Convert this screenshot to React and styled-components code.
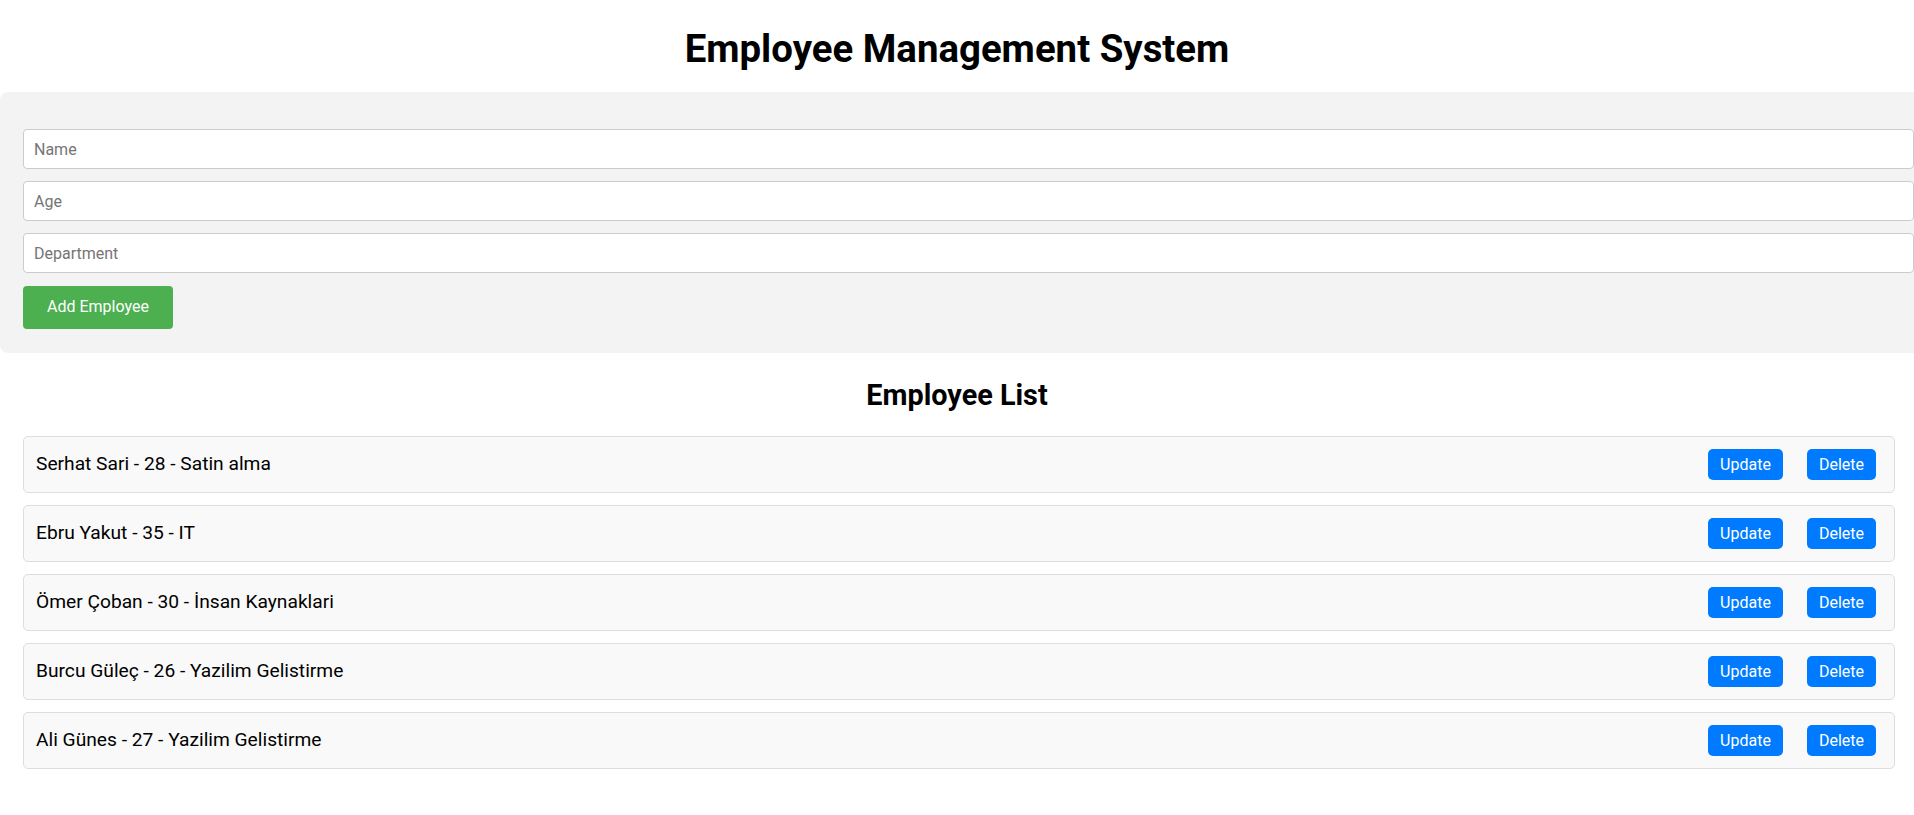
import React from "react";
import styled, { createGlobalStyle } from "styled-components";

const GlobalStyle = createGlobalStyle`
  html, body {
    margin: 0;
    padding: 0;
    overflow-x: hidden;
    background: #ffffff;
  }
  body {
    font-family: Roboto, "Liberation Sans", Arial, sans-serif;
    color: #000;
  }
  * { box-sizing: border-box; }
`;

const Page = styled.div`
  display: flex;
  flex-direction: column;
  width: 100%;
`;

const Title = styled.h1`
  margin: 26px 0 21px;
  font-size: 38.4px;
  font-weight: 700;
  line-height: 45px;
  text-align: center;
`;

const FormPanel = styled.form`
  display: flex;
  flex-direction: column;
  align-items: flex-start;
  gap: 12px;
  width: calc(100% + 20px);
  margin-top: 0;
  padding: 37px 20px 24px 23px;
  background: #f3f3f3;
  border-radius: 8px;
`;

const Field = styled.input`
  width: 100%;
  height: 40px;
  padding: 10px;
  border: 1px solid #ccc;
  border-radius: 4px;
  background: #fff;
  font-family: Roboto, "Liberation Sans", Arial, sans-serif;
  font-size: 16px;
  color: #000;
  outline: none;
  &::placeholder { color: #757575; }
`;

const AddButton = styled.button`
  margin-top: 1px;
  padding: 12px 24px;
  border: none;
  border-radius: 4px;
  background: #4caf50;
  color: #fff;
  font-family: Roboto, "Liberation Sans", Arial, sans-serif;
  font-size: 16px;
  line-height: 18.75px;
  cursor: pointer;
`;

const ListTitle = styled.h2`
  margin: 25px 0 24px;
  font-size: 28.8px;
  font-weight: 700;
  line-height: 34px;
  text-align: center;
`;

const List = styled.ul`
  list-style: none;
  margin: 0;
  padding: 0 19px 0 23px;
  display: flex;
  flex-direction: column;
  gap: 12px;
`;

const Item = styled.li`
  display: flex;
  align-items: center;
  gap: 24px;
  height: 57px;
  padding: 0 18px 0 12px;
  background: #f9f9f9;
  border: 1px solid #ddd;
  border-radius: 5px;
`;

const ItemText = styled.span`
  flex: 1;
  font-size: 19.2px;
  line-height: 22.5px;
  color: #000;
`;

const ActionButton = styled.button`
  height: 31px;
  padding: 0 12px;
  border: none;
  border-radius: 5px;
  background: #007bff;
  color: #fff;
  font-family: Roboto, "Liberation Sans", Arial, sans-serif;
  font-size: 16px;
  cursor: pointer;
`;

const employees = [
  { name: "Serhat Sari", age: 28, department: "Satin alma" },
  { name: "Ebru Yakut", age: 35, department: "IT" },
  { name: "Ömer Çoban", age: 30, department: "İnsan Kaynaklari" },
  { name: "Burcu Güleç", age: 26, department: "Yazilim Gelistirme" },
  { name: "Ali Günes", age: 27, department: "Yazilim Gelistirme" },
];

export default function App() {
  return (
    <>
      <GlobalStyle />
      <Page>
        <Title>Employee Management System</Title>
        <FormPanel onSubmit={(e) => e.preventDefault()}>
          <Field type="text" placeholder="Name" />
          <Field type="text" placeholder="Age" />
          <Field type="text" placeholder="Department" />
          <AddButton type="submit">Add Employee</AddButton>
        </FormPanel>
        <ListTitle>Employee List</ListTitle>
        <List>
          {employees.map((emp) => (
            <Item key={emp.name}>
              <ItemText>
                {emp.name} - {emp.age} - {emp.department}
              </ItemText>
              <ActionButton type="button">Update</ActionButton>
              <ActionButton type="button">Delete</ActionButton>
            </Item>
          ))}
        </List>
      </Page>
    </>
  );
}
